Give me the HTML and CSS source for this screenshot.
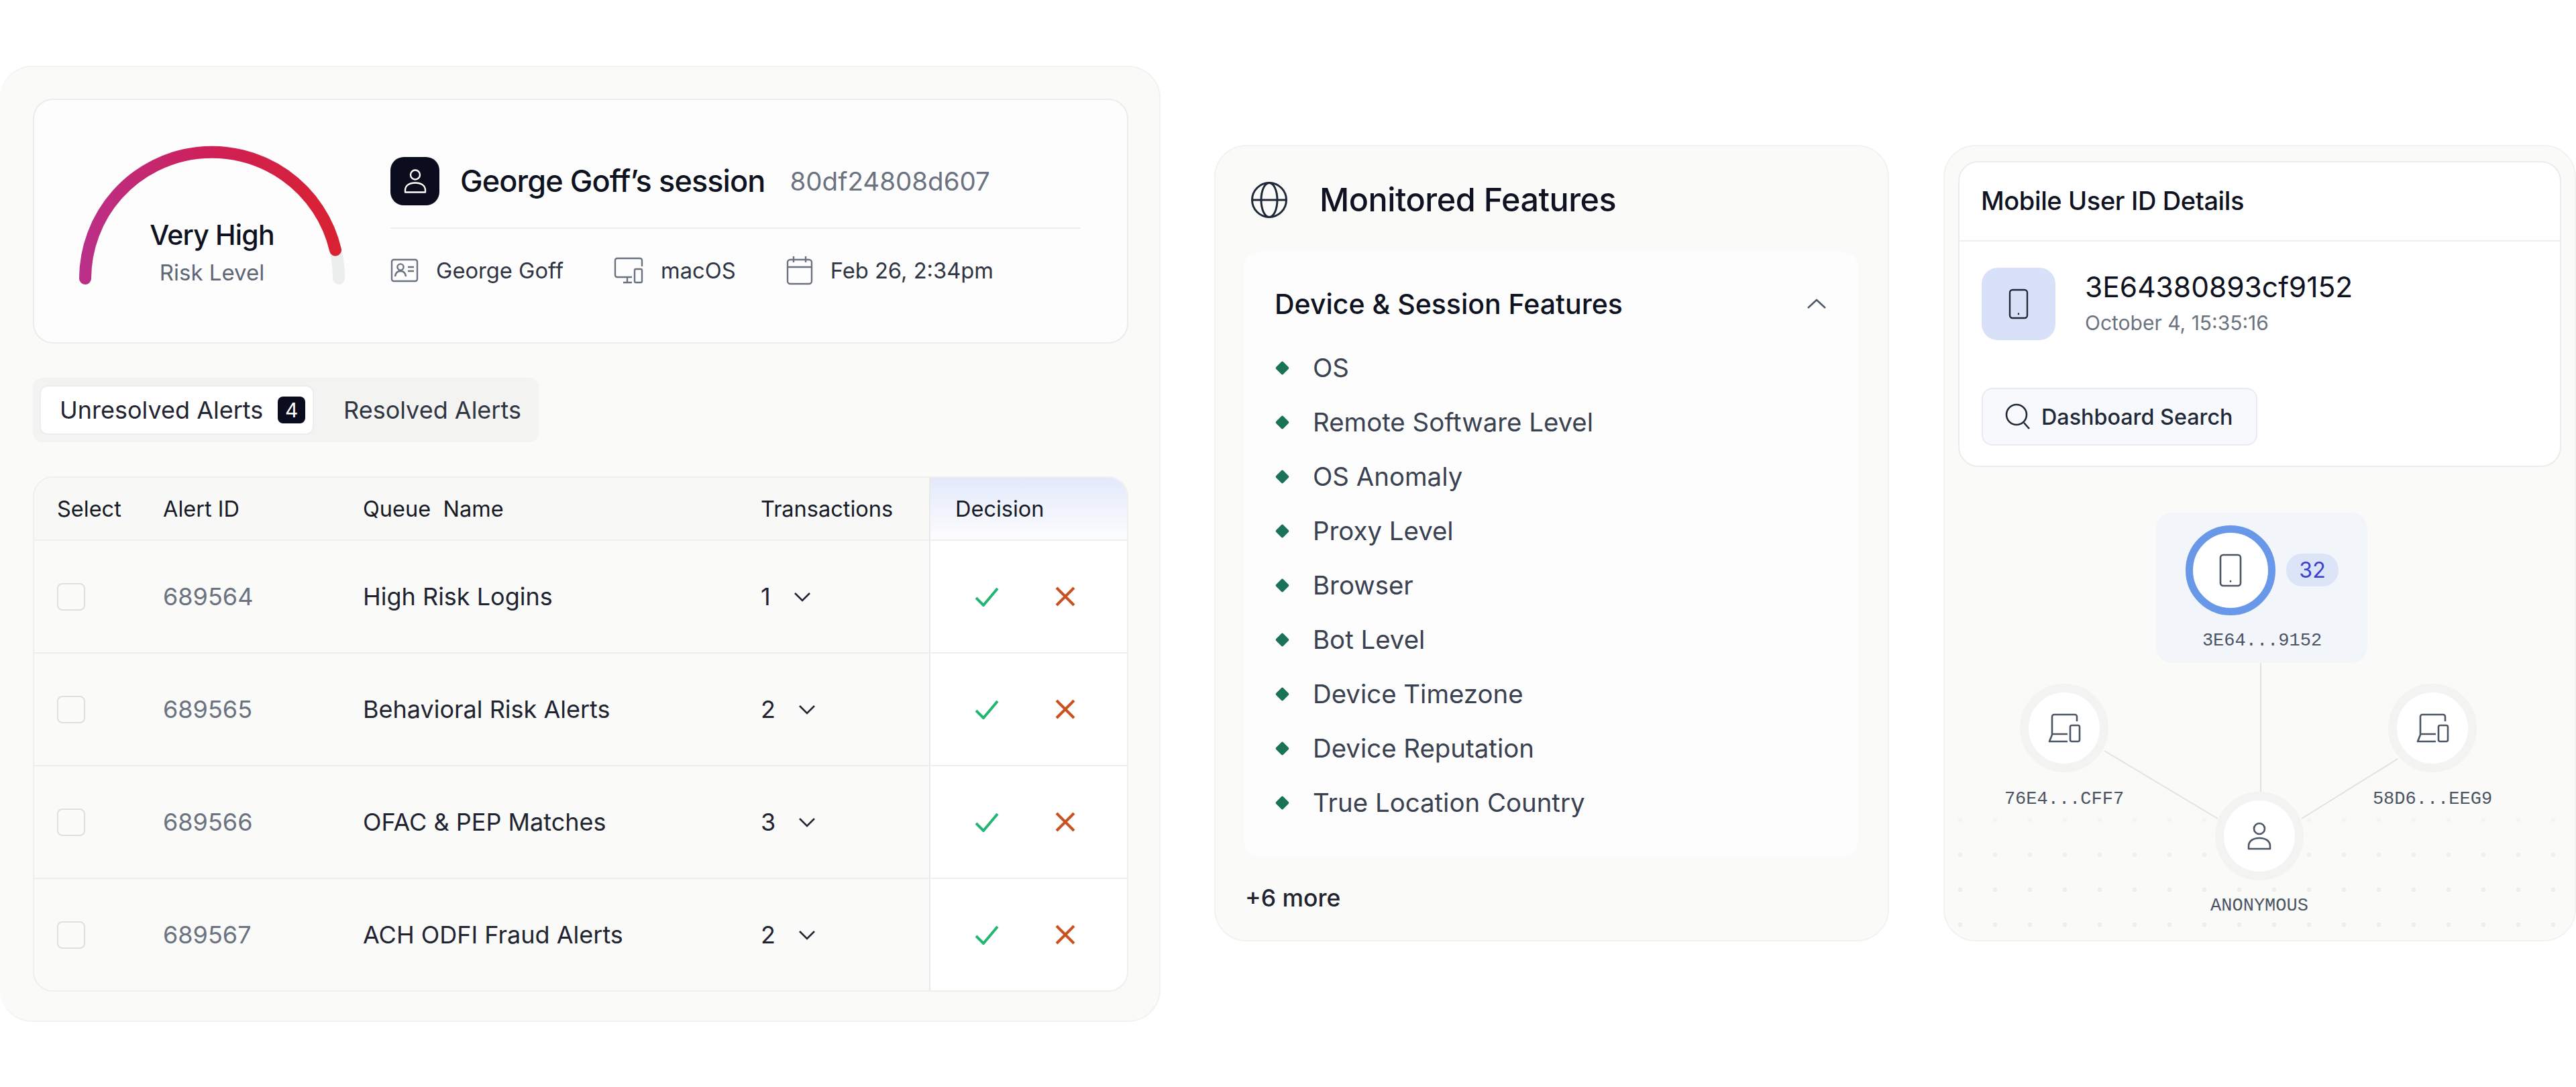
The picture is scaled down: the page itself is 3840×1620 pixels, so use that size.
FILE: index.html
```html
<!DOCTYPE html>
<html lang="en">
<head>
    <meta charset="UTF-8">
    <title>Session Review</title>
    <link rel="stylesheet" href="styles.css">
</head>
<body>
    <div class="board">
        <section class="card card-session">
            <div class="session-box">
                <div class="gauge">
                    <svg width="396" height="210" viewBox="0 0 396 210" fill="none">
                        <defs>
                            <linearGradient id="risk" gradientUnits="userSpaceOnUse" x1="0" y1="0" x2="396" y2="0">
                                <stop offset="0" stop-color="#b9308a"/>
                                <stop offset="0.5" stop-color="#cf1f57"/>
                                <stop offset="1" stop-color="#d9222f"/>
                            </linearGradient>
                        </defs>
                        <path d="M9 198A189 189 0 0 1 387 198" stroke="#eceeed" stroke-width="18" stroke-linecap="round"/>
                        <path d="M9 198A189 189 0 0 1 382 155.5" stroke="url(#risk)" stroke-width="18" stroke-linecap="round"/>
                    </svg>
                    <div class="gauge-label">
                        <div class="gauge-value">Very High</div>
                        <div class="gauge-caption">Risk Level</div>
                    </div>
                </div>
                <div class="session-info">
                    <div class="session-title">
                        <span class="session-avatar">
                            <svg width="44" height="44" viewBox="0 0 44 44" fill="none" stroke="#fff" stroke-width="2.4">
                                <circle cx="22" cy="12.5" r="7"/>
                                <path d="M7 38.5v-3c0-7 6-11 15-11s15 4 15 11v3z" stroke-linejoin="round"/>
                            </svg>
                        </span>
                        <span class="session-name">George Goff’s session</span>
                        <span class="session-id">80df24808d607</span>
                    </div>
                    <div class="session-meta">
                        <span class="meta-item">
                            <svg width="42" height="36" viewBox="0 0 42 36" fill="none" stroke="#6b7280" stroke-width="2.4">
                                <rect x="2" y="2" width="38" height="32" rx="3"/>
                                <circle cx="15" cy="13" r="4.6"/>
                                <path d="M7 27c.6-5 3.6-8 8-8s7.4 3 8 8M26 13h9M26 19h9"/>
                            </svg>
                            George Goff
                        </span>
                        <span class="meta-item">
                            <svg width="44" height="40" viewBox="0 0 44 40" fill="none" stroke="#6b7280" stroke-width="2.4" stroke-linejoin="round">
                                <path d="M42 14V5a3 3 0 0 0-3-3H5a3 3 0 0 0-3 3v22a3 3 0 0 0 3 3h22M14 38h13M20 30v8"/>
                                <rect x="31" y="18" width="11" height="20" rx="2"/>
                            </svg>
                            macOS
                        </span>
                        <span class="meta-item">
                            <svg width="40" height="44" viewBox="0 0 40 44" fill="none" stroke="#6b7280" stroke-width="2.4">
                                <rect x="2" y="6" width="36" height="36" rx="4"/>
                                <path d="M2 17h36M11 1v9M29 1v9"/>
                            </svg>
                            Feb 26, 2:34pm
                        </span>
                    </div>
                </div>
            </div>

            <div class="tabs">
                <div class="tab tab-active">Unresolved Alerts <span class="tab-count">4</span></div>
                <div class="tab">Resolved Alerts</div>
            </div>

            <div class="alerts">
                <div class="alert-row alert-head">
                    <div class="cell cell-select">Select</div>
                    <div class="cell">Alert ID</div>
                    <div class="cell cell-queue">Queue&nbsp; Name</div>
                    <div class="cell">Transactions</div>
                    <div class="cell cell-decision">Decision</div>
                </div>
                <div class="alert-row">
                    <div class="cell cell-select"><span class="checkbox"></span></div>
                    <div class="cell cell-id">689564</div>
                    <div class="cell">High Risk Logins</div>
                    <div class="cell cell-count">1 <svg class="chevron" width="26" height="15" viewBox="0 0 26 15" fill="none" stroke="#1f2430" stroke-width="2.6"><path d="M2 2l11 11L24 2"/></svg></div>
                    <div class="cell cell-decision">
                        <svg width="36" height="30" viewBox="0 0 36 30" fill="none" stroke="#22b573" stroke-width="4"><path d="M2 17l11 11L34 3"/></svg>
                        <svg width="30" height="30" viewBox="0 0 30 30" fill="none" stroke="#c9501f" stroke-width="4"><path d="M2 2l26 26M28 2L2 28"/></svg>
                    </div>
                </div>
                <div class="alert-row">
                    <div class="cell cell-select"><span class="checkbox"></span></div>
                    <div class="cell cell-id">689565</div>
                    <div class="cell">Behavioral Risk Alerts</div>
                    <div class="cell cell-count">2 <svg class="chevron" width="26" height="15" viewBox="0 0 26 15" fill="none" stroke="#1f2430" stroke-width="2.6"><path d="M2 2l11 11L24 2"/></svg></div>
                    <div class="cell cell-decision">
                        <svg width="36" height="30" viewBox="0 0 36 30" fill="none" stroke="#22b573" stroke-width="4"><path d="M2 17l11 11L34 3"/></svg>
                        <svg width="30" height="30" viewBox="0 0 30 30" fill="none" stroke="#c9501f" stroke-width="4"><path d="M2 2l26 26M28 2L2 28"/></svg>
                    </div>
                </div>
                <div class="alert-row">
                    <div class="cell cell-select"><span class="checkbox"></span></div>
                    <div class="cell cell-id">689566</div>
                    <div class="cell">OFAC &amp; PEP Matches</div>
                    <div class="cell cell-count">3 <svg class="chevron" width="26" height="15" viewBox="0 0 26 15" fill="none" stroke="#1f2430" stroke-width="2.6"><path d="M2 2l11 11L24 2"/></svg></div>
                    <div class="cell cell-decision">
                        <svg width="36" height="30" viewBox="0 0 36 30" fill="none" stroke="#22b573" stroke-width="4"><path d="M2 17l11 11L34 3"/></svg>
                        <svg width="30" height="30" viewBox="0 0 30 30" fill="none" stroke="#c9501f" stroke-width="4"><path d="M2 2l26 26M28 2L2 28"/></svg>
                    </div>
                </div>
                <div class="alert-row">
                    <div class="cell cell-select"><span class="checkbox"></span></div>
                    <div class="cell cell-id">689567</div>
                    <div class="cell">ACH ODFI Fraud Alerts</div>
                    <div class="cell cell-count">2 <svg class="chevron" width="26" height="15" viewBox="0 0 26 15" fill="none" stroke="#1f2430" stroke-width="2.6"><path d="M2 2l11 11L24 2"/></svg></div>
                    <div class="cell cell-decision">
                        <svg width="36" height="30" viewBox="0 0 36 30" fill="none" stroke="#22b573" stroke-width="4"><path d="M2 17l11 11L34 3"/></svg>
                        <svg width="30" height="30" viewBox="0 0 30 30" fill="none" stroke="#c9501f" stroke-width="4"><path d="M2 2l26 26M28 2L2 28"/></svg>
                    </div>
                </div>
            </div>
        </section>

        <section class="card card-features">
            <div class="features-head">
                <svg width="56" height="56" viewBox="0 0 56 56" fill="none" stroke="#1f2937" stroke-width="3">
                    <circle cx="28" cy="28" r="25.5"/>
                    <ellipse cx="28" cy="28" rx="12" ry="25.5"/>
                    <path d="M3 28h50"/>
                </svg>
                <h2>Monitored Features</h2>
            </div>
            <div class="features-box">
                <div class="features-sub">
                    <h3>Device &amp; Session Features</h3>
                    <svg width="30" height="16" viewBox="0 0 30 16" fill="none" stroke="#4b5563" stroke-width="2.4"><path d="M2 14L15 2l13 12"/></svg>
                </div>
                <ul class="features-list">
                    <li>OS</li>
                    <li>Remote Software Level</li>
                    <li>OS Anomaly</li>
                    <li>Proxy Level</li>
                    <li>Browser</li>
                    <li>Bot Level</li>
                    <li>Device Timezone</li>
                    <li>Device Reputation</li>
                    <li>True Location Country</li>
                </ul>
            </div>
            <div class="features-more">+6 more</div>
        </section>

        <section class="card card-mobile">
            <div class="mobile-box">
                <div class="mobile-title">Mobile User ID Details</div>
                <div class="mobile-user">
                    <span class="mobile-tile">
                        <svg width="30" height="46" viewBox="0 0 30 46" fill="none" stroke="#1f2937" stroke-width="2.4">
                            <rect x="2" y="2" width="26" height="42" rx="4"/>
                            <path d="M15 37.5v.5" stroke-linecap="round"/>
                        </svg>
                    </span>
                    <div>
                        <div class="mobile-id">3E64380893cf9152</div>
                        <div class="mobile-date">October 4, 15:35:16</div>
                    </div>
                </div>
                <button class="search-btn">
                    <svg width="38" height="40" viewBox="0 0 38 40" fill="none" stroke="#1f2937" stroke-width="2.6">
                        <circle cx="17" cy="17" r="15"/>
                        <path d="M28 29l8 9"/>
                    </svg>
                    Dashboard Search
                </button>
            </div>

            <div class="graph">
                <div class="dots"></div>
                <div class="graph-focus"></div>
                <svg class="graph-lines" width="941" height="705" fill="none" stroke="#e2e2de" stroke-width="2">
                    <path d="M471 292V484M238 423L407 524M675 435L532 524"/>
                </svg>
                <div class="node node-main">
                    <svg width="34" height="50" viewBox="0 0 34 50" fill="none" stroke="#4b5563" stroke-width="2.6">
                        <rect x="2" y="2" width="30" height="46" rx="4"/>
                        <path d="M17 41v.5" stroke-linecap="round"/>
                    </svg>
                </div>
                <div class="node-count">32</div>
                <div class="node-label label-main">3E64...9152</div>

                <div class="node node-left">
                    <svg width="50" height="44" viewBox="0 0 50 44" fill="none" stroke="#4b5563" stroke-width="2.6" stroke-linejoin="round">
                        <path d="M44 12V5a3 3 0 0 0-3-3H10a3 3 0 0 0-3 3v27L3 42h27M8 31h22"/>
                        <rect x="34" y="18" width="14" height="24" rx="2.5"/>
                    </svg>
                </div>
                <div class="node-label label-left">76E4...CFF7</div>

                <div class="node node-right">
                    <svg width="50" height="44" viewBox="0 0 50 44" fill="none" stroke="#4b5563" stroke-width="2.6" stroke-linejoin="round">
                        <path d="M44 12V5a3 3 0 0 0-3-3H10a3 3 0 0 0-3 3v27L3 42h27M8 31h22"/>
                        <rect x="34" y="18" width="14" height="24" rx="2.5"/>
                    </svg>
                </div>
                <div class="node-label label-right">58D6...EEG9</div>

                <div class="node node-anon">
                    <svg width="36" height="42" viewBox="0 0 36 42" fill="none" stroke="#4b5563" stroke-width="2.6" stroke-linejoin="round">
                        <circle cx="18" cy="10" r="8"/>
                        <path d="M2 40v-4c0-7 6-12 16-12s16 5 16 12v4z"/>
                    </svg>
                </div>
                <div class="node-label label-anon">ANONYMOUS</div>
            </div>
        </section>
    </div>
</body>
</html>
```

FILE: styles.css
```css
* {
    box-sizing: border-box;
}
body {
    margin: 0;
    background: #fff;
    font-family: 'Inter', 'Liberation Sans', sans-serif;
    color: #0f1220;
}
h2, h3, ul {
    margin: 0;
    padding: 0;
}
.board {
    display: flex;
    align-items: flex-start;
    width: 3840px;
}
.card {
    background: #fafaf8;
    border: 2px solid #f2f2ef;
    border-radius: 48px;
}

/* session card */
.card-session {
    width: 1730px;
    height: 1425px;
    margin-top: 98px;
    padding: 47px 0 0 49px;
    border-left: 0;
}
.session-box {
    display: flex;
    width: 1633px;
    height: 365px;
    padding-left: 67px;
    background: #fdfdfd;
    border: 2px solid #ececea;
    border-radius: 30px;
}
.gauge {
    position: relative;
    width: 396px;
    height: 210px;
    margin-top: 68px;
}
.gauge svg {
    display: block;
}
.gauge-label {
    position: absolute;
    left: 0;
    right: 0;
    top: 105px;
    text-align: center;
}
.gauge-value {
    margin-bottom: 3px;
    font-size: 41px;
    line-height: 56px;
    font-weight: 500;
    letter-spacing: -0.02em;
}
.gauge-caption {
    font-size: 33px;
    line-height: 50px;
    color: #5f6675;
}
.session-info {
    width: 1029px;
    margin-left: 68px;
    margin-top: 85px;
}
.session-title {
    display: flex;
    align-items: center;
    height: 107px;
    padding-bottom: 34px;
    border-bottom: 2px solid #efefed;
}
.session-avatar {
    display: flex;
    align-items: center;
    justify-content: center;
    width: 73px;
    height: 72px;
    margin-right: 31px;
    background: #0b0c1e;
    border-radius: 20px;
}
.session-name {
    font-size: 45px;
    font-weight: 500;
    letter-spacing: -0.02em;
    margin-right: 37px;
}
.session-id {
    font-size: 38.5px;
    color: #6b7280;
}
.session-meta {
    display: flex;
    align-items: center;
    gap: 75px;
    margin-top: 40px;
}
.meta-item {
    display: flex;
    align-items: center;
    gap: 26px;
    font-size: 32.7px;
    color: #2f3542;
}

/* tabs */
.tabs {
    display: flex;
    align-items: center;
    width: 754px;
    height: 96px;
    margin-top: 51px;
    padding-left: 10px;
    background: #f3f3f1;
    border-radius: 14px;
}
.tab {
    display: flex;
    align-items: center;
    height: 74px;
    padding-left: 30px;
    font-size: 36px;
    color: #2f3542;
}
.tab-active {
    width: 409px;
    background: #fff;
    border: 2px solid #ecedef;
    border-radius: 12px;
    padding-left: 28px;
    color: #1f2430;
    margin-right: 14px;
}
.tab-count {
    display: flex;
    align-items: center;
    justify-content: center;
    width: 41px;
    height: 40px;
    margin-left: 22px;
    background: #0b0c1e;
    border-radius: 8px;
    color: #fff;
    font-size: 30px;
}

/* alerts table */
.alerts {
    width: 1633px;
    margin-top: 51px;
    border: 2px solid #efefed;
    border-radius: 30px;
    overflow: hidden;
    background: #fafaf9;
}
.alert-row {
    display: grid;
    grid-template-columns: 192px 298px 593px 251px 1fr;
    height: 168px;
    border-top: 2px solid #eeeeec;
    font-size: 36px;
    color: #1f2430;
}
.alert-head {
    height: 92px;
    border-top: 0;
    background: #f8f8f6;
    font-size: 32.5px;
    color: #161a26;
}
.cell {
    display: flex;
    align-items: center;
}
.cell-select {
    padding-left: 34px;
}
.cell-id {
    color: #6b7280;
}
.cell-count {
    gap: 34px;
}
.cell-decision {
    gap: 84px;
    padding-left: 66px;
    background: #fff;
    border-left: 2px solid #e9e9e7;
}
.alert-head .cell-decision {
    padding-left: 37px;
    background: linear-gradient(to bottom, #e3e9fb, #fdfdfe);
}
.checkbox {
    display: block;
    width: 42px;
    height: 41px;
    background: #fbfbfa;
    border: 2px solid #dfdfdd;
    border-radius: 8px;
}

/* monitored features */
.card-features {
    width: 1006px;
    height: 1187px;
    margin-top: 216px;
    margin-left: 80px;
}
.features-head {
    display: flex;
    align-items: center;
    gap: 47px;
    height: 157px;
    padding: 2px 0 0 52px;
}
.features-head h2 {
    font-size: 48.5px;
    font-weight: 500;
    letter-spacing: -0.01em;
}
.features-box {
    width: 916px;
    height: 901px;
    margin-left: 42px;
    background: #fdfdfd;
    border-radius: 24px;
}
.features-sub {
    display: flex;
    align-items: center;
    justify-content: space-between;
    height: 50px;
    padding: 0 47px 0 46px;
    position: relative;
    top: 53px;
}
.features-sub h3 {
    font-size: 41px;
    font-weight: 500;
}
.features-list {
    list-style: none;
    padding: 83px 0 0 56px;
}
.features-list li {
    position: relative;
    height: 81px;
    line-height: 81px;
    padding-left: 47px;
    font-size: 38.4px;
    color: #3a4150;
}
.features-list li::before {
    content: "";
    position: absolute;
    left: -6px;
    top: 33px;
    width: 15px;
    height: 15px;
    background: #1a7357;
    border-radius: 2px;
    transform: rotate(45deg);
}
.features-more {
    padding: 41px 0 0 44px;
    font-size: 35.5px;
    font-weight: 500;
    color: #1f2430;
}

/* mobile user card */
.card-mobile {
    position: relative;
    width: 943px;
    height: 1187px;
    margin-top: 216px;
    margin-left: 81px;
    overflow: hidden;
}
.mobile-box {
    width: 899px;
    height: 456px;
    margin: 22px 0 0 20px;
    background: #fff;
    border: 2px solid #ececea;
    border-radius: 30px;
}
.mobile-title {
    display: flex;
    align-items: center;
    height: 118px;
    padding: 0 0 2px 32px;
    border-bottom: 2px solid #efefed;
    font-size: 38px;
    font-weight: 500;
    letter-spacing: -0.01em;
}
.mobile-user {
    display: flex;
    align-items: center;
    gap: 44px;
    margin-top: 39px;
    padding-left: 33px;
}
.mobile-tile {
    display: flex;
    align-items: center;
    justify-content: center;
    width: 110px;
    height: 108px;
    background: #d9e1f8;
    border-radius: 24px;
}
.mobile-id {
    font-size: 42.5px;
    line-height: 54px;
}
.mobile-date {
    margin-top: 2px;
    font-size: 30px;
    line-height: 48px;
    color: #6b7280;
}
.search-btn {
    display: flex;
    align-items: center;
    gap: 16px;
    width: 411px;
    height: 86px;
    margin: 71px 0 0 33px;
    padding: 0 0 0 33px;
    background: #f7f9fd;
    border: 2px solid #e8ecf2;
    border-radius: 16px;
    font-family: inherit;
    font-size: 32.3px;
    font-weight: 500;
    color: #1f2937;
}

/* graph, nodes sit on a free canvas */
.graph {
    position: relative;
    height: 705px;
}
.dots {
    position: absolute;
    left: 0;
    right: 0;
    top: 500px;
    bottom: 0;
    background-image: radial-gradient(circle, #eeeeeb 3px, transparent 3.5px);
    background-size: 52px 52px;
    background-position: -3px 0;
    -webkit-mask-image: linear-gradient(to bottom, rgba(0, 0, 0, 0.3), #000 45%);
    mask-image: linear-gradient(to bottom, rgba(0, 0, 0, 0.3), #000 45%);
}
.graph-focus {
    position: absolute;
    left: 315px;
    top: 68px;
    width: 315px;
    height: 224px;
    background: #f2f6fb;
    border-radius: 24px;
}
.graph-lines {
    position: absolute;
    left: 0;
    top: 0;
}
.node {
    position: absolute;
    display: flex;
    align-items: center;
    justify-content: center;
    width: 132px;
    height: 132px;
    background: #fff;
    border: 13px solid #f3f3f1;
    border-radius: 50%;
}
.node-main {
    left: 359px;
    top: 87px;
    width: 134px;
    height: 134px;
    border: 11px solid #6a98e8;
}
.node-left {
    left: 112px;
    top: 323px;
}
.node-right {
    left: 661px;
    top: 323px;
}
.node-anon {
    left: 403px;
    top: 484px;
}
.node-count {
    position: absolute;
    left: 509px;
    top: 129px;
    width: 78px;
    height: 49px;
    background: #dce4f8;
    border-radius: 24px;
    color: #3a3fd0;
    font-size: 32px;
    line-height: 49px;
    text-align: center;
}
.node-label {
    position: absolute;
    width: 220px;
    height: 32px;
    font-family: 'Liberation Mono', monospace;
    font-size: 27px;
    line-height: 32px;
    text-align: center;
    color: #4b5563;
}
.label-main {
    left: 363px;
    top: 243px;
}
.label-left {
    left: 68px;
    top: 479px;
}
.label-right {
    left: 617px;
    top: 479px;
}
.label-anon {
    left: 359px;
    top: 638px;
}
```
